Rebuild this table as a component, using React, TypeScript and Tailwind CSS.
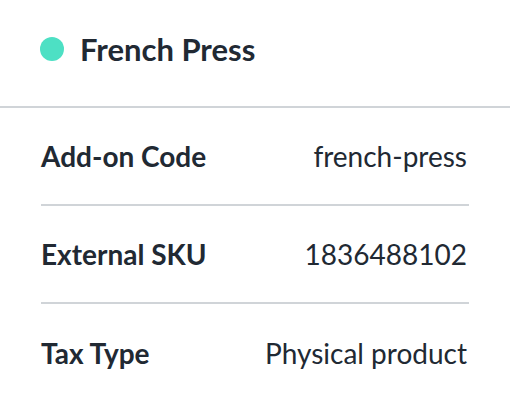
import React from "react";

const rows = [
  { label: "Add-on Code", value: "french-press" },
  { label: "External SKU", value: "1836488102" },
  { label: "Tax Type", value: "Physical product" },
];

export default function App() {
  return (
    <div
      className="w-[510px] h-[402px] bg-white text-[#212933] overflow-hidden"
      style={{ fontFamily: "Lato, 'Noto Sans', sans-serif" }}
    >
      <div className="h-[108px] border-b-2 border-[#d0d4d8] flex items-center pl-10 pb-[8px] gap-4">
        <span className="w-6 h-6 rounded-full bg-[#4de0c4] shrink-0" />
        <span className="text-[31px] font-bold leading-none">French Press</span>
      </div>
      <div className="mx-[41px]">
        {rows.map((r, i) => (
          <div
            key={r.label}
            className={`h-[98px] flex items-center justify-between pr-[2px] ${
              i < rows.length - 1 ? "border-b-2 border-[#d0d4d8]" : ""
            }`}
          >
            <span className="text-[28px] font-bold leading-none">{r.label}</span>
            <span className="text-[28px] font-normal leading-none">{r.value}</span>
          </div>
        ))}
      </div>
    </div>
  );
}
